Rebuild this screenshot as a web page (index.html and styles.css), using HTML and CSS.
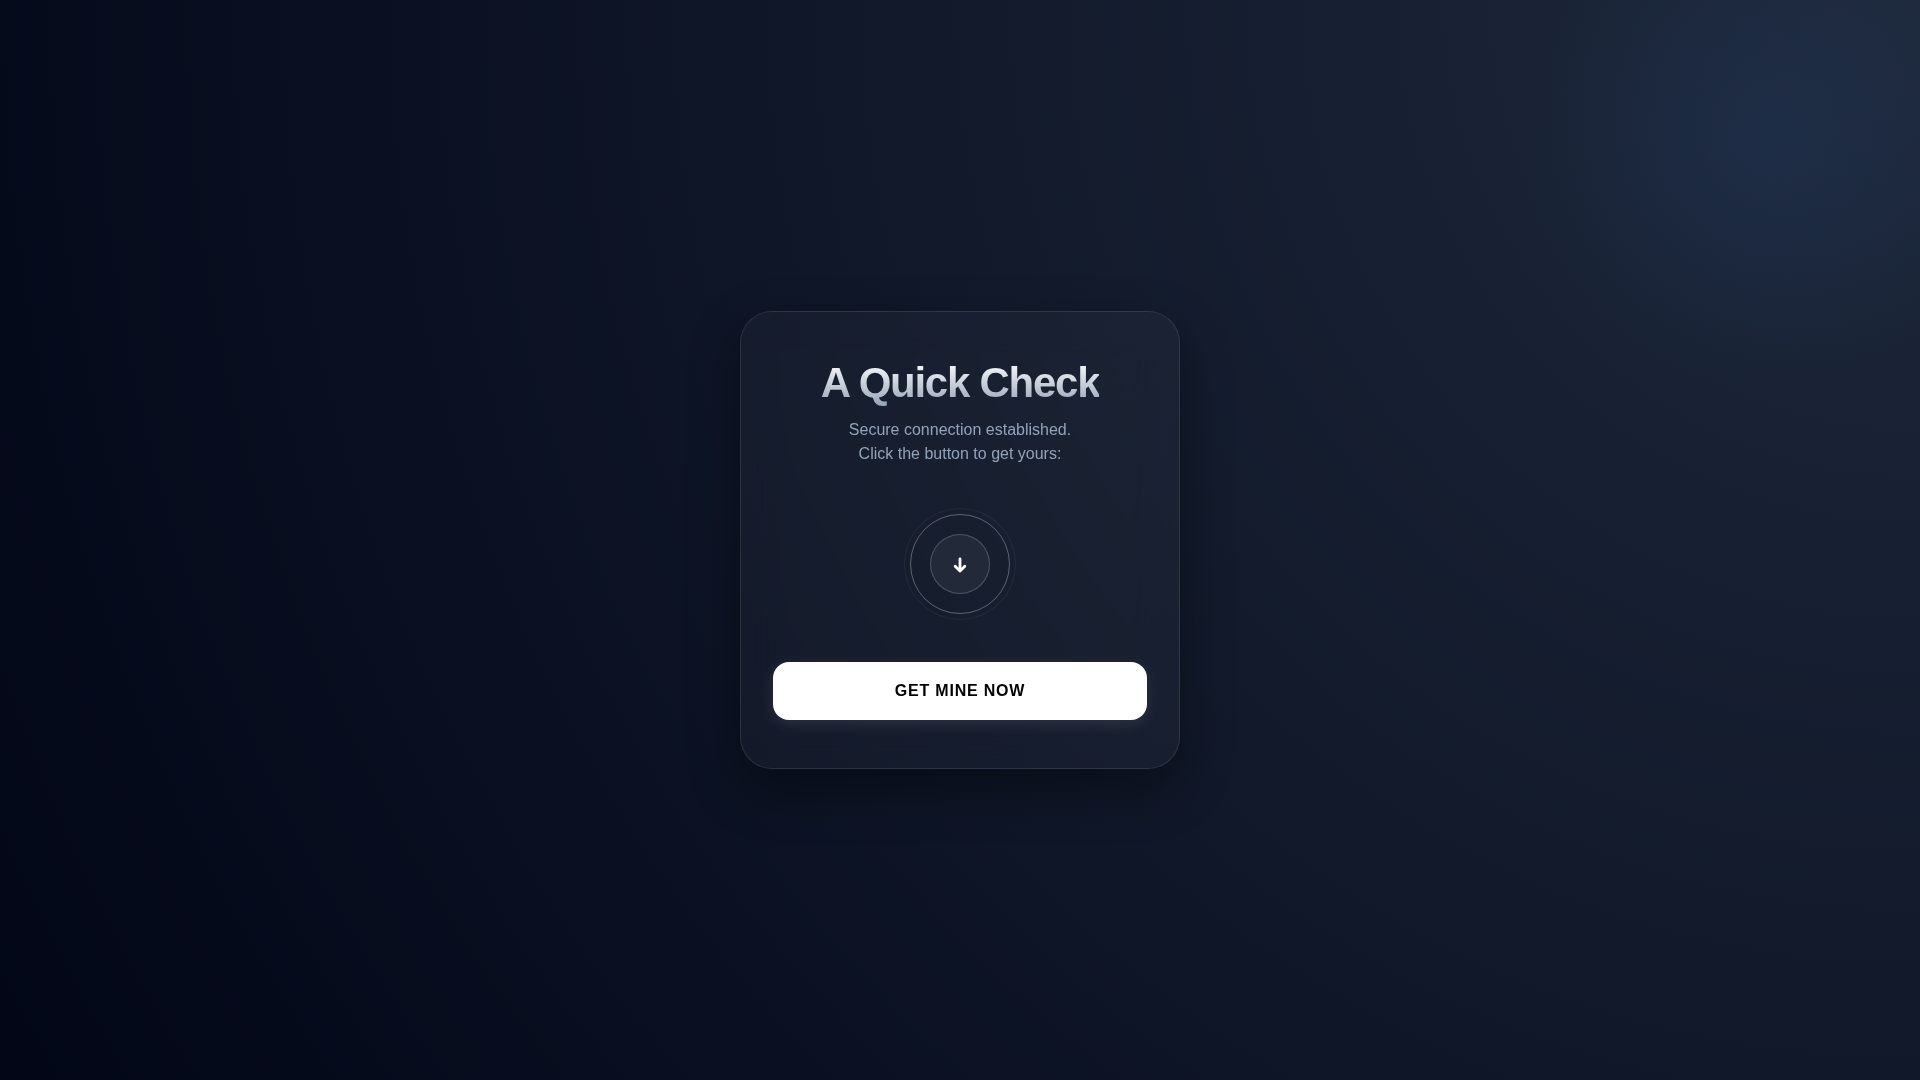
FILE: index.html
```html
<!DOCTYPE html>
<html lang="en">
<head>
    <meta charset="UTF-8">
    <meta name="viewport" content="width=device-width, initial-scale=1.0">
    <title>A Quick Check</title>
    <link rel="stylesheet" href="styles.css">
</head>
<body>
    <div class="glow"></div>

    <main class="card">
        <h1 class="title">A Quick Check</h1>
        <p class="subtitle">Secure connection established.<br>Click the button to get yours:</p>

        <div class="pulse">
            <div class="pulse-core">
                <svg class="arrow" viewBox="0 0 24 24" aria-hidden="true">
                    <path d="M12 7v12M7.2 14.2l4.8 4.8 4.8-4.8"/>
                </svg>
            </div>
        </div>

        <button type="button" class="cta">GET MINE NOW</button>
    </main>
</body>
</html>
```
FILE: styles.css
```css
* {
    margin: 0;
    padding: 0;
    box-sizing: border-box;
}

body {
    font-family: "Liberation Sans", Arial, sans-serif;
    background: radial-gradient(circle at top right, #1e293b, #020617);
    color: #fff;
    min-height: 100vh;
    display: flex;
    align-items: center;
    justify-content: center;
    overflow: hidden;
    position: relative;
}

/* Soft light in the corner */
.glow {
    position: absolute;
    top: -10%;
    right: -5%;
    width: 500px;
    height: 500px;
    border-radius: 50%;
    background: radial-gradient(circle, rgba(59, 130, 246, 0.08), transparent 70%);
    pointer-events: none;
}

.card {
    position: relative;
    width: 90%;
    max-width: 440px;
    padding: 48px 32px;
    display: flex;
    flex-direction: column;
    align-items: center;
    text-align: center;
    background: rgba(255, 255, 255, 0.03);
    border: 1px solid rgba(255, 255, 255, 0.1);
    border-radius: 32px;
    backdrop-filter: blur(20px);
    box-shadow: 0 20px 50px rgba(0, 0, 0, 0.4);
}

.title {
    font-size: 42px;
    font-weight: 700;
    line-height: 46px;
    letter-spacing: -0.03em;
    margin-bottom: 12px;
    background: linear-gradient(to bottom, #fff, #94a3b8);
    -webkit-background-clip: text;
    background-clip: text;
    color: transparent;
}

.subtitle {
    color: #94a3b8;
    font-size: 16px;
    line-height: 24px;
}

/* Rings around the arrow */
.pulse {
    position: relative;
    width: 100px;
    height: 100px;
    margin: 48px 0;
    border: 1px solid rgba(255, 255, 255, 0.3);
    border-radius: 50%;
    display: flex;
    align-items: center;
    justify-content: center;
}

.pulse::after {
    content: '';
    position: absolute;
    inset: -7px;
    border: 1px solid rgba(255, 255, 255, 0.06);
    border-radius: 50%;
}

.pulse-core {
    width: 60px;
    height: 60px;
    background: rgba(255, 255, 255, 0.05);
    border: 1px solid rgba(255, 255, 255, 0.2);
    border-radius: 50%;
    display: flex;
    align-items: center;
    justify-content: center;
}

.arrow {
    width: 24px;
    height: 24px;
    fill: none;
    stroke: #fff;
    stroke-width: 2.8;
    stroke-linecap: round;
    stroke-linejoin: round;
}

.cta {
    width: 100%;
    padding: 20px;
    font-family: inherit;
    font-size: 16px;
    font-weight: 700;
    line-height: 18px;
    letter-spacing: 0.05em;
    color: #000;
    background: #fff;
    border: none;
    border-radius: 16px;
    box-shadow: 0 4px 15px rgba(255, 255, 255, 0.1);
    cursor: pointer;
}
```
